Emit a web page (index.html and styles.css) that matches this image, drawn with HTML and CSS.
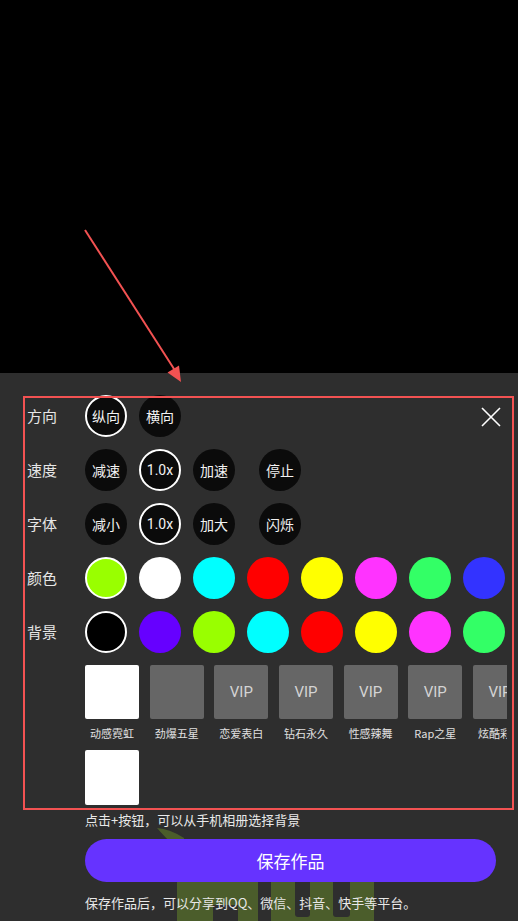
FILE: index.html
```html
<!DOCTYPE html>
<html lang="zh">
<head>
<meta charset="utf-8">
<link rel="stylesheet" href="styles.css">
</head>
<body>
<div class="screen">
  <div class="preview"></div>
  <div class="panel">
    <svg class="bg-art" width="230" height="101" viewBox="0 0 230 101">
      <path d="M7 8 Q20 9 34 18 L34 26 L24 26 Q14 16 7 8 Z" fill="#4b5d2b"/>
      <rect x="27" y="60" width="197" height="41" fill="#4b5d2b"/>
      <rect x="63" y="85" width="25" height="16" fill="#2e2e2e"/>
      <rect x="108" y="62" width="13" height="39" fill="#2e2e2e"/>
      <rect x="145" y="56" width="15" height="41" rx="3" fill="#2e2e2e"/>
      <rect x="183" y="56" width="17" height="41" rx="3" fill="#2e2e2e"/>
    </svg>

    <svg class="close" width="20" height="20" viewBox="0 0 20 20">
      <path d="M1 1 L19 19 M19 1 L1 19" stroke="#ffffff" stroke-width="1.6" fill="none"/>
    </svg>

    <div class="row">
      <div class="label">方向</div>
      <div class="opts">
        <div class="circle sel">纵向</div>
        <div class="circle">横向</div>
      </div>
    </div>
    <div class="row">
      <div class="label">速度</div>
      <div class="opts">
        <div class="circle">减速</div>
        <div class="circle sel num">1.0x</div>
        <div class="circle">加速</div>
        <div class="circle extra">停止</div>
      </div>
    </div>
    <div class="row">
      <div class="label">字体</div>
      <div class="opts">
        <div class="circle">减小</div>
        <div class="circle sel num">1.0x</div>
        <div class="circle">加大</div>
        <div class="circle extra">闪烁</div>
      </div>
    </div>
    <div class="row">
      <div class="label">颜色</div>
      <div class="opts">
        <div class="sw sel c-lime"></div>
        <div class="sw c-white"></div>
        <div class="sw c-cyan"></div>
        <div class="sw c-red"></div>
        <div class="sw c-yellow"></div>
        <div class="sw c-magenta"></div>
        <div class="sw c-green"></div>
        <div class="sw c-blue"></div>
      </div>
    </div>
    <div class="row">
      <div class="label">背景</div>
      <div class="opts">
        <div class="sw sel c-black"></div>
        <div class="sw c-purple"></div>
        <div class="sw c-lime"></div>
        <div class="sw c-cyan"></div>
        <div class="sw c-red"></div>
        <div class="sw c-yellow"></div>
        <div class="sw c-magenta"></div>
        <div class="sw c-green"></div>
      </div>
    </div>

    <div class="tiles">
      <div class="tile"><div class="thumb white"></div><div class="name">动感霓虹</div></div>
      <div class="tile"><div class="thumb"></div><div class="name">劲爆五星</div></div>
      <div class="tile"><div class="thumb">VIP</div><div class="name">恋爱表白</div></div>
      <div class="tile"><div class="thumb">VIP</div><div class="name">钻石永久</div></div>
      <div class="tile"><div class="thumb">VIP</div><div class="name">性感辣舞</div></div>
      <div class="tile"><div class="thumb">VIP</div><div class="name">Rap之星</div></div>
      <div class="tile"><div class="thumb">VIP</div><div class="name">炫酷彩虹</div></div>
    </div>
    <div class="add-tile"></div>

    <p class="hint">点击+按钮，可以从手机相册选择背景</p>
    <button class="save">保存作品</button>
    <p class="hint share">保存作品后，可以分享到QQ、微信、抖音、快手等平台。</p>
  </div>

  <div class="mark-rect"></div>
  <svg class="mark-arrow" width="518" height="921" viewBox="0 0 518 921">
    <line x1="85" y1="230" x2="176" y2="372" stroke="#f25252" stroke-width="2"/>
    <polygon points="181,382 167.5,372.5 179,365.5" fill="#f25252"/>
  </svg>
</div>
</body>
</html>
```

FILE: styles.css
```css
* { box-sizing: border-box; }
html, body {
  margin: 0;
  padding: 0;
  background: #000;
}
body {
  font-family: "Noto Sans CJK SC", "Noto Sans", sans-serif;
  color: #fff;
}
.screen {
  position: relative;
  width: 518px;
  height: 921px;
  overflow: hidden;
  display: flex;
  flex-direction: column;
}
.preview {
  height: 373px;
  flex-shrink: 0;
  background: #000;
}
.panel {
  position: relative;
  flex: 1;
  background: #2e2e2e;
  padding: 22px 0 0 27px;
}
.bg-art {
  position: absolute;
  left: 150px;
  top: 447px;
  z-index: 0;
}
.close {
  position: absolute;
  left: 481px;
  top: 34px;
}
.row {
  position: relative;
  display: flex;
  align-items: center;
  height: 42px;
  margin-bottom: 12px;
}
.label {
  width: 58px;
  flex-shrink: 0;
  font-size: 15px;
  color: #e6e6e6;
  line-height: 20px;
}
.opts {
  display: flex;
  gap: 12px;
}
.circle {
  width: 42px;
  height: 42px;
  border-radius: 50%;
  background: #0b0b0b;
  color: #f2f2f2;
  font-size: 14px;
  display: flex;
  align-items: center;
  justify-content: center;
  flex-shrink: 0;
}
.circle.num {
  font-family: Roboto, "Noto Sans CJK SC", sans-serif;
  font-size: 14px;
}
.circle.sel {
  border: 2px solid #ffffff;
}
.circle.extra {
  margin-left: 12px;
}
.sw {
  width: 42px;
  height: 42px;
  border-radius: 50%;
  flex-shrink: 0;
}
.sw.sel {
  border: 2px solid #ffffff;
}
.c-lime { background: #99ff00; }
.c-white { background: #ffffff; }
.c-cyan { background: #00ffff; }
.c-red { background: #ff0000; }
.c-yellow { background: #ffff00; }
.c-magenta { background: #ff33ff; }
.c-green { background: #33ff66; }
.c-blue { background: #3333ff; }
.c-black { background: #000000; }
.c-purple { background: #6600ff; }

.tiles {
  position: relative;
  display: flex;
  gap: 10.67px;
  margin-left: 58px;
  width: 422px;
  overflow: hidden;
}
.tile {
  width: 54px;
  flex-shrink: 0;
  display: flex;
  flex-direction: column;
  align-items: center;
}
.thumb {
  width: 54px;
  height: 54px;
  border-radius: 2px;
  background: #666666;
  color: #d4d4d4;
  font-family: Roboto, "Noto Sans CJK SC", sans-serif;
  font-size: 15px;
  display: flex;
  align-items: center;
  justify-content: center;
}
.thumb.white { background: #ffffff; }
.name {
  margin-top: 7px;
  font-size: 11px;
  line-height: 14px;
  color: #e0e0e0;
  white-space: nowrap;
}
.add-tile {
  position: relative;
  width: 54px;
  height: 55px;
  margin: 10px 0 0 58px;
  background: #ffffff;
  border-radius: 2px;
}
.hint {
  position: relative;
  margin: 7px 0 0 58px;
  font-size: 13px;
  line-height: 16px;
  color: #e8e8e8;
  white-space: nowrap;
}
.save {
  position: relative;
  display: block;
  margin: 11px 0 0 58px;
  width: 411px;
  height: 43px;
  border: none;
  border-radius: 22px;
  background: #6633ff;
  color: #ffffff;
  font-family: "Noto Sans CJK SC", sans-serif;
  font-size: 17px;
  padding: 0;
}
.hint.share {
  margin-top: 13px;
}
.mark-rect {
  position: absolute;
  left: 23px;
  top: 396px;
  width: 491px;
  height: 414px;
  border: 2px solid #f25252;
  pointer-events: none;
}
.mark-arrow {
  position: absolute;
  left: 0;
  top: 0;
  pointer-events: none;
}
```
